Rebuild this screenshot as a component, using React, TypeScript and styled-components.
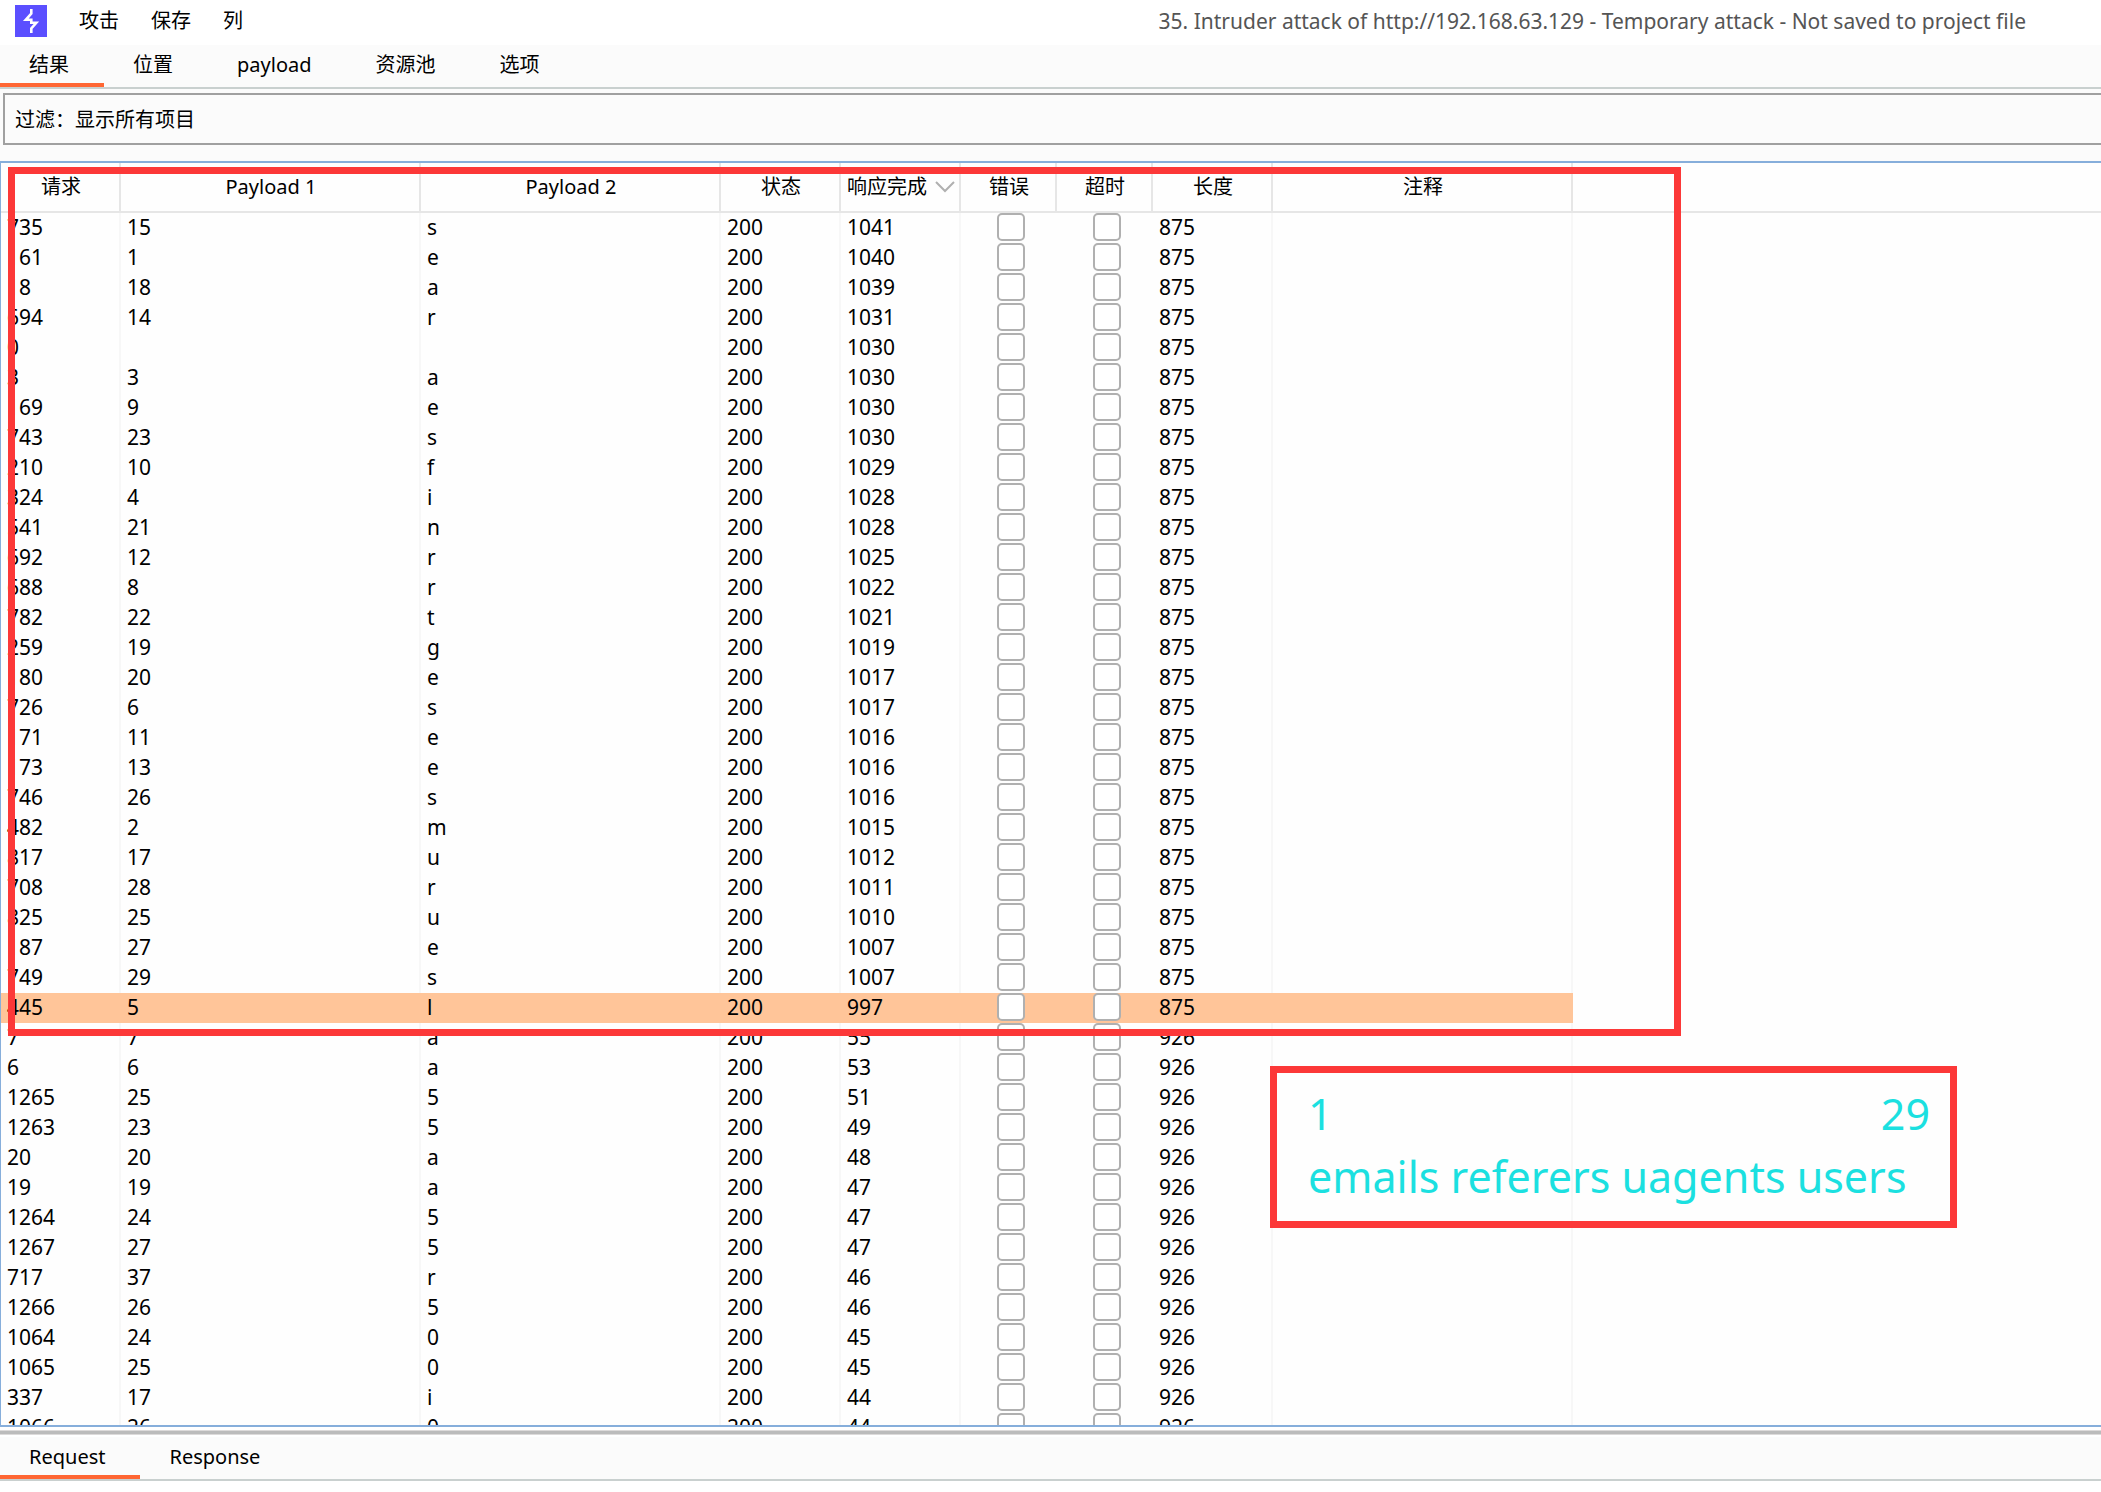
import React from "react";
import styled, { createGlobalStyle } from "styled-components";

const GlobalStyle = createGlobalStyle`
  * { box-sizing: border-box; }
  body {
    margin: 0;
    background: #fefefe;
    color: #000;
    font: 20px/30px "Noto Sans", "Noto Sans CJK SC", sans-serif;
  }
  button, input { font: inherit; color: inherit; }
`;

const Window = styled.div`
  display: flex;
  flex-direction: column;
  height: 100vh;
  overflow: hidden;
  white-space: nowrap;
`;

const MenuBar = styled.header`
  display: flex;
  align-items: center;
  flex: none;
  height: 45px;
  padding: 0 75px 3px 15px;
  background: #fff;
`;

const Logo = styled.svg`
  display: block;
  width: 32px;
  height: 32px;
  margin-right: 16px;
`;

const MenuItem = styled.button`
  padding: 0 16px;
  border: 0;
  background: none;
`;

const WindowTitle = styled.h1`
  margin: 0 0 0 auto;
  color: #555;
  font-size: 21px;
  font-weight: 400;
`;

const TabBar = styled.div`
  display: flex;
  flex: none;
  height: 44px;
  background: #fbfbfb;
  border-bottom: 2px solid #c9d0cf;
`;

const Tab = styled.button<{ $active?: boolean }>`
  padding: 2px 35px 0 29px;
  border: 0;
  border-bottom: 4px solid ${(p) => (p.$active ? "#ff6633" : "transparent")};
  background: none;
  line-height: 34px;
`;

const FilterArea = styled.section`
  flex: none;
  padding: 4px 0 16px 3px;
  background: #fbfbfb;
`;

const FilterButton = styled.button`
  display: block;
  width: 100%;
  height: 52px;
  padding: 2px 10px 0;
  border: 2px solid #a0a0a0;
  border-right: 0;
  background: #fbfbfb;
  text-align: left;
`;

const TableArea = styled.main`
  position: relative;
  flex: 1;
  min-height: 0;
  overflow: hidden;
  border: 2px solid #86aedb;
  border-width: 2px 0 2px 1px;
`;

const Table = styled.table`
  width: 100%;
  table-layout: fixed;
  border-collapse: separate;
  border-spacing: 0;
`;

const HeadCell = styled.th`
  height: 50px;
  padding: 0 0 0 2px;
  border-right: 2px solid #e6e6e6;
  border-bottom: 2px solid #e6e6e6;
  font-weight: 400;
  &:last-child { border-right: 0; }
`;

const SortLabel = styled.span`
  display: flex;
  align-items: center;
  justify-content: center;
  gap: 8px;
`;

const Chevron = styled.svg`
  width: 20px;
  height: 14px;
`;

const Row = styled.tr<{ $selected: boolean }>`
  & > td:not(:last-child) {
    background: ${(p) => (p.$selected ? "#ffc599" : "transparent")};
    border-color: ${(p) => (p.$selected ? "#ffc599" : "#f7f7f7")};
  }
`;

const Cell = styled.td<{ $line?: boolean }>`
  height: 30px;
  padding: 0 0 2px 6px;
  font-size: 21px;
  line-height: 28px;
  border-right: ${(p) => (p.$line ? "2px solid" : "0")};
`;

const CheckCell = styled.td`
  height: 30px;
  padding: 0 0 2px 4px;
`;

const Check = styled.input`
  appearance: none;
  display: block;
  width: 28px;
  height: 28px;
  margin: 0 auto;
  border: 2px solid #b0b0b0;
  border-radius: 5px;
  background: #fff;
`;

const Frame = styled.div`
  position: absolute;
  border: 7px solid #fc3838;
  pointer-events: none;
`;

const RowsFrame = styled(Frame)`
  top: 4px;
  left: 7px;
  width: 1673px;
  height: 869px;
`;

const NoteFrame = styled(Frame)`
  top: 903px;
  left: 1269px;
  width: 687px;
  height: 162px;
  padding: 9px 20px 0 31px;
  color: #1be0e0;
  font-size: 43px;
  line-height: 63px;
`;

const NoteLine = styled.p`
  display: flex;
  justify-content: space-between;
  margin: 0;
`;

const Divider = styled.div`
  flex: none;
  height: 10px;
  padding-top: 3px;
  background: #fff;
  &::after {
    content: "";
    display: block;
    height: 3px;
    background: #bbb;
    border: 1px solid #dcdada;
    border-width: 1px 0;
  }
`;

const MessagePane = styled.footer`
  flex: none;
  padding-bottom: 11px;
  background: #fff;
`;

const widths = [120, 300, 300, 120, 120, 96, 96, 120, 300];
const heads = ["请求", "Payload 1", "Payload 2", "状态", "响应完成", "错误", "超时", "长度", "注释"];

// request, payload 1, payload 2, response completed, length
const rows = `
735 15 s 1041|161 1 e 1040|18 18 a 1039|694 14 r 1031|0 - - 1030|3 3 a 1030|169 9 e 1030
743 23 s 1030|210 10 f 1029|324 4 i 1028|541 21 n 1028|692 12 r 1025|688 8 r 1022|782 22 t 1021
259 19 g 1019|180 20 e 1017|726 6 s 1017|171 11 e 1016|173 13 e 1016|746 26 s 1016|482 2 m 1015
817 17 u 1012|708 28 r 1011|825 25 u 1010|187 27 e 1007|749 29 s 1007|445 5 l 997|7 7 a 55
6 6 a 53|1265 25 5 51|1263 23 5 49|20 20 a 48|19 19 a 47|1264 24 5 47|1267 27 5 47
717 37 r 46|1266 26 5 46|1064 24 0 45|1065 25 0 45|337 17 i 44|1066 26 0 44`
  .trim()
  .split(/[|\n]/)
  .map((line) => {
    const [id, first, second, time] = line.split(" ").map((v) => (v === "-" ? "" : v));
    return { id, first, second, time, length: Number(time) > 900 ? "875" : "926" };
  });

const Tabs = ({ items }: { items: string[] }) => (
  <TabBar role="tablist">
    {items.map((item, i) => (
      <Tab key={item} role="tab" aria-selected={i === 0} $active={i === 0}>{item}</Tab>
    ))}
  </TabBar>
);

export default function App() {
  return (
    <Window>
      <GlobalStyle />
      <MenuBar>
        <Logo viewBox="0 0 32 32" aria-hidden="true">
          <path fill="#5b4fff" d="M0 0h32v32H0z" />
          <path
            fill="none"
            stroke="#fff"
            strokeWidth="2.6"
            d="M16.300 4v4.500L10.800 14.800H16.300V17.800H21.300L16.300 23.500V28"
          />
        </Logo>
        {["攻击", "保存", "列"].map((m) => <MenuItem key={m}>{m}</MenuItem>)}
        <WindowTitle>35. Intruder attack of http://192.168.63.129 - Temporary attack - Not saved to project file</WindowTitle>
      </MenuBar>
      <Tabs items={["结果", "位置", "payload", "资源池", "选项"]} />
      <FilterArea>
        <FilterButton>过滤：显示所有项目</FilterButton>
      </FilterArea>
      <TableArea>
        <Table>
          <colgroup>
            {widths.map((w, i) => <col key={i} width={w} />)}
            <col />
          </colgroup>
          <thead>
            <tr>
              {heads.map((h, i) => (
                <HeadCell key={h} scope="col">
                  {i === 4 ? (
                    <SortLabel>
                      {h}
                      <Chevron viewBox="0 0 20 14" aria-hidden="true">
                        <path d="M1 2l9 9 9-9" fill="none" stroke="#b0b0b0" strokeWidth="2" />
                      </Chevron>
                    </SortLabel>
                  ) : h}
                </HeadCell>
              ))}
              <HeadCell />
            </tr>
          </thead>
          <tbody>
            {rows.map(({ id, first, second, time, length }) => (
              <Row key={id} $selected={id === "445"}>
                <Cell $line>{id}</Cell>
                <Cell $line>{first}</Cell>
                <Cell $line>{second}</Cell>
                <Cell $line>200</Cell>
                <Cell $line>{time}</Cell>
                <CheckCell><Check type="checkbox" aria-label={`错误 ${id}`} /></CheckCell>
                <CheckCell><Check type="checkbox" aria-label={`超时 ${id}`} /></CheckCell>
                <Cell $line>{length}</Cell>
                <Cell $line />
                <Cell />
              </Row>
            ))}
          </tbody>
        </Table>
        <RowsFrame />
        <NoteFrame>
          <NoteLine><span>1</span><span>29</span></NoteLine>
          <NoteLine>emails referers uagents users</NoteLine>
        </NoteFrame>
      </TableArea>
      <Divider />
      <MessagePane>
        <Tabs items={["Request", "Response"]} />
      </MessagePane>
    </Window>
  );
}
